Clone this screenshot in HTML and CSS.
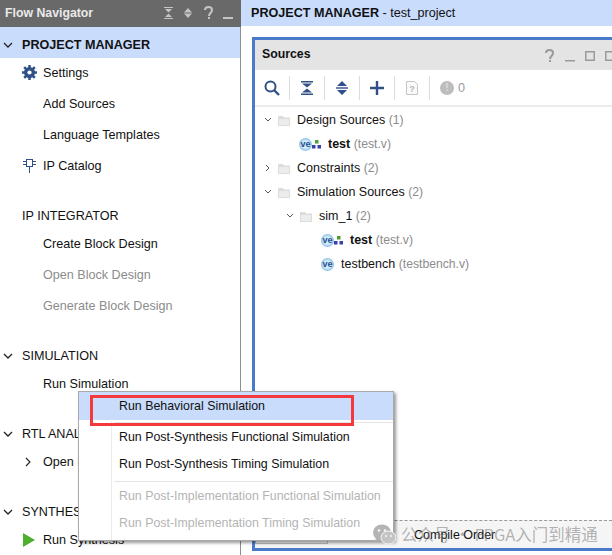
FILE: index.html
```html
<!DOCTYPE html>
<html lang="en">
<head>
<meta charset="utf-8">
<title>Flow Navigator</title>
<link rel="stylesheet" href="styles.css">
</head>
<body>
<div class="app">
  <aside class="nav">
    <header class="nav-head">
      <span class="nav-title">Flow Navigator</span>
      <svg class="nav-tools" width="70" height="14" viewBox="0 0 70 14">
        <g fill="#c4c4c4">
          <path d="M0 1h9v1H0zM0 12h9v1H0zM1 3h7L4.500 6.500zM1 11h7L4.500 7.500z"/>
          <path d="M20.500 6h7l-3.500-4zM20.500 8h7l-3.500 4z"/>
          <rect x="20" y="6.500" width="8" height="1"/>
          <rect x="59" y="11" width="10" height="2"/>
        </g>
        <path d="M41 4c0-4 7-4 7 0 0 3-3 3-3 6" fill="none" stroke="#c4c4c4" stroke-width="2"/>
        <rect x="44" y="11" width="2" height="2" fill="#c4c4c4"/>
      </svg>
    </header>
    <div class="group first">
      <div class="group-head active"><svg class="chev" width="10" height="6" viewBox="0 0 10 6"><path d="M1 1l4 4 4-4" fill="none" stroke="#222" stroke-width="1.300"/></svg><span class="bold">PROJECT MANAGER</span></div>
      <div class="item"><svg class="ico" width="15" height="15" viewBox="0 0 15 15"><circle cx="7.500" cy="7.500" r="3.800" fill="none" stroke="#2f5089" stroke-width="3.400"/><g stroke="#2f5089" stroke-width="2.500"><path d="M7.500 0v15M0 7.500h15M2.200 2.200l10.600 10.600M12.800 2.200L2.200 12.800"/></g><circle cx="7.500" cy="7.500" r="2.100" fill="#fff"/></svg><span>Settings</span></div>
      <div class="item"><span>Add Sources</span></div>
      <div class="item"><span>Language Templates</span></div>
      <div class="item"><svg class="ico" width="15" height="15" viewBox="0 0 15 15"><g fill="none" stroke="#2f5089"><rect x="4.500" y="1.500" width="6" height="7"/><path d="M7.500 9v6M1 3.500h3M1 6.500h3M11 3.500h3M11 6.500h3"/></g></svg><span>IP Catalog</span></div>
    </div>
    <div class="group">
      <div class="group-head"><svg class="chev blank" width="10" height="6"></svg><span>IP INTEGRATOR</span></div>
      <div class="item"><span>Create Block Design</span></div>
      <div class="item off"><span>Open Block Design</span></div>
      <div class="item off"><span>Generate Block Design</span></div>
    </div>
    <div class="group">
      <div class="group-head"><svg class="chev" width="10" height="6" viewBox="0 0 10 6"><path d="M1 1l4 4 4-4" fill="none" stroke="#222" stroke-width="1.300"/></svg><span>SIMULATION</span></div>
      <div class="item"><span>Run Simulation</span></div>
    </div>
    <div class="group">
      <div class="group-head"><svg class="chev" width="10" height="6" viewBox="0 0 10 6"><path d="M1 1l4 4 4-4" fill="none" stroke="#222" stroke-width="1.300"/></svg><span>RTL ANALYSIS</span></div>
      <div class="item"><svg class="sub" width="6" height="10" viewBox="0 0 6 10"><path d="M1 1l4 4-4 4" fill="none" stroke="#222" stroke-width="1.100"/></svg><span>Open Elaborated Design</span></div>
    </div>
    <div class="group">
      <div class="group-head"><svg class="chev" width="10" height="6" viewBox="0 0 10 6"><path d="M1 1l4 4 4-4" fill="none" stroke="#222" stroke-width="1.300"/></svg><span>SYNTHESIS</span></div>
      <div class="item"><svg class="ico play" width="12" height="14" viewBox="0 0 12 14"><path d="M0 0l12 7-12 7z" fill="#4caf2e"/></svg><span>Run Synthesis</span></div>
    </div>
  </aside>
  <main class="main">
    <div class="crumb"><span><b>PROJECT MANAGER</b> - test_project</span></div>
    <section class="panel">
      <header class="panel-head">
        <span class="panel-title">Sources</span>
        <svg class="panel-tools" width="67" height="14" viewBox="0 0 67 14">
          <path d="M1 4c0-4 7-4 7 0 0 3-3 3-3 6" fill="none" stroke="#9a9a9a" stroke-width="2"/>
          <rect x="4" y="11" width="2" height="2" fill="#9a9a9a"/>
          <rect x="20" y="11" width="10" height="1.500" fill="#9a9a9a"/>
          <rect x="40.750" y="2.750" width="8.500" height="8.500" fill="none" stroke="#9a9a9a" stroke-width="1.500"/>
          <rect x="60.750" y="2.750" width="8.500" height="8.500" fill="none" stroke="#9a9a9a" stroke-width="1.500"/>
        </svg>
      </header>
      <div class="toolbar">
        <span class="tool"><svg width="16" height="16" viewBox="0 0 16 16"><circle cx="6.500" cy="6.500" r="5" fill="none" stroke="#2f5089" stroke-width="2"/><path d="M10 10l5 5" stroke="#2f5089" stroke-width="2.400"/></svg></span>
        <span class="tool"><svg width="14" height="16" viewBox="0 0 14 16"><path fill="#2f5089" d="M1 1h12v1.500H1zM1 13.500h12V15H1zM2 3.500h10L7 7.500zM2 12.500h10L7 8.500z"/></svg></span>
        <span class="tool"><svg width="14" height="16" viewBox="0 0 14 16"><path fill="#2f5089" d="M2 6h10L7 1zM2 10h10l-5 5z"/><rect x="1" y="7.300" width="12" height="1.400" fill="#2f5089"/></svg></span>
        <span class="tool"><svg width="14" height="14" viewBox="0 0 14 14"><path fill="#2f5089" d="M5.800 0h2.400v5.800H14v2.400H8.200V14H5.800V8.200H0V5.800h5.800z"/></svg></span>
        <span class="tool"><svg width="12" height="14" viewBox="0 0 12 14"><path d="M.5.500h8l3 3v10H.5z" fill="#fafafa" stroke="#c4c4c4"/><text x="6" y="10.500" text-anchor="middle" class="doc-q">?</text></svg></span>
        <span class="tool last"><i class="dot">!</i><span class="count">0</span></span>
      </div>
      <div class="tree">
        <div class="row l0"><svg class="tw" width="8" height="6" viewBox="0 0 8 6"><path d="M1 1l3 3 3-3" fill="none" stroke="#555"/></svg><svg class="fold" width="12" height="11" viewBox="0 0 12 11"><path d="M0 1h5l1 1.500h6V11H0z" fill="#dcdcdc"/><rect x="1" y="4" width="10" height="6" fill="#ececec"/></svg><span>Design Sources <em>(1)</em></span></div>
        <div class="row l1"><i class="ve">ve</i><svg class="hier" width="9" height="9" viewBox="0 0 9 9"><rect x="3" y="0" width="3.500" height="3.500" fill="#4ca02e"/><rect y="5" width="3.500" height="3.500" fill="#3b3fa8"/><rect x="5.500" y="5" width="3.500" height="3.500" fill="#3b3fa8"/></svg><span><b>test</b> <em>(test.v)</em></span></div>
        <div class="row l0"><svg class="tw" width="8" height="8" viewBox="0 0 8 8"><path d="M2 1l3 3-3 3" fill="none" stroke="#555"/></svg><svg class="fold" width="12" height="11" viewBox="0 0 12 11"><path d="M0 1h5l1 1.500h6V11H0z" fill="#dcdcdc"/><rect x="1" y="4" width="10" height="6" fill="#ececec"/></svg><span>Constraints <em>(2)</em></span></div>
        <div class="row l0"><svg class="tw" width="8" height="6" viewBox="0 0 8 6"><path d="M1 1l3 3 3-3" fill="none" stroke="#555"/></svg><svg class="fold" width="12" height="11" viewBox="0 0 12 11"><path d="M0 1h5l1 1.500h6V11H0z" fill="#dcdcdc"/><rect x="1" y="4" width="10" height="6" fill="#ececec"/></svg><span>Simulation Sources <em>(2)</em></span></div>
        <div class="row l2"><svg class="tw" width="8" height="6" viewBox="0 0 8 6"><path d="M1 1l3 3 3-3" fill="none" stroke="#555"/></svg><svg class="fold" width="12" height="11" viewBox="0 0 12 11"><path d="M0 1h5l1 1.500h6V11H0z" fill="#dcdcdc"/><rect x="1" y="4" width="10" height="6" fill="#ececec"/></svg><span>sim_1 <em>(2)</em></span></div>
        <div class="row l3"><i class="ve">ve</i><svg class="hier" width="9" height="9" viewBox="0 0 9 9"><rect x="3" y="0" width="3.500" height="3.500" fill="#4ca02e"/><rect y="5" width="3.500" height="3.500" fill="#3b3fa8"/><rect x="5.500" y="5" width="3.500" height="3.500" fill="#3b3fa8"/></svg><span><b>test</b> <em>(test.v)</em></span></div>
        <div class="row l3"><i class="ve">ve</i><span class="tb">testbench <em>(testbench.v)</em></span></div>
      </div>
      <footer class="tabs"><span class="tab"></span><span class="tab-text">Compile Order</span></footer>
    </section>
  </main>
</div>
<div class="menu">
  <div class="mi hot">Run Behavioral Simulation</div>
  <hr class="sep sep-a">
  <div class="mi">Run Post-Synthesis Functional Simulation</div>
  <div class="mi">Run Post-Synthesis Timing Simulation</div>
  <hr class="sep sep-b">
  <div class="mi dis">Run Post-Implementation Functional Simulation</div>
  <div class="mi dis">Run Post-Implementation Timing Simulation</div>
</div>
<div class="redbox"></div>
<div class="mark"><svg width="23" height="21" viewBox="0 0 23 21"><ellipse cx="9" cy="8.500" rx="9" ry="8" fill="#b4b4b4"/><path d="M3 13l-1 5 5-3z" fill="#b4b4b4"/><ellipse cx="15.500" cy="13.500" rx="7.500" ry="6.500" fill="#c4c4c4" stroke="#f5f5f5"/><circle cx="6" cy="6.500" r="1.300" fill="#f5f5f5"/><circle cx="12" cy="6.500" r="1.300" fill="#f5f5f5"/><circle cx="13" cy="12" r="1" fill="#f5f5f5"/><circle cx="18" cy="12" r="1" fill="#f5f5f5"/></svg><span>公众号 · FPGA入门到精通</span></div>
</body>
</html>
```
FILE: styles.css
```css
* { box-sizing: border-box; }
html, body { margin: 0; padding: 0; }
body {
  width: 612px; height: 555px; overflow: hidden; background: #fff; position: relative;
  font: 12.6px "Liberation Sans", Arial, sans-serif; color: #111;
}
.app { display: flex; width: 612px; height: 555px; }
.nav { width: 241px; flex: none; border-right: 1px solid #8f8f8f; display: flex; flex-direction: column; }
.nav-head { height: 27px; flex: none; background: #696969; display: flex; align-items: center; justify-content: space-between; padding: 0 7px 2px 5px; margin-right: -1px; }
.nav-title { color: #e9e9e9; font-weight: bold; font-size: 12.300px; }
.bold { font-weight: bold; }
.group { display: flex; flex-direction: column; padding-top: 17px; flex: none; }
.group.first { padding-top: 0; }
.group-head { height: 31px; margin-bottom: -1px; display: flex; align-items: center; padding: 4px 0 0 3px; gap: 9px; flex: none; }
.group-head.active { background: #c9dcfb; }
.chev.blank { visibility: hidden; }
.item { height: 31px; flex: none; display: flex; align-items: center; padding-left: 22px; position: relative; }
.item > span { position: absolute; left: 43px; white-space: nowrap; }
.item.off { color: #8c8c8c; }
.ico { display: block; }
.play { margin-left: 1px; }
.sub { margin-left: 3px; }
.main { flex: 1; min-width: 0; display: flex; flex-direction: column; }
.crumb { height: 26px; background: #c9dcfb; display: flex; align-items: center; white-space: pre; padding-left: 10px; flex: none; }
.panel { margin: 11px 0 4px 11px; flex: 1; border: 3px solid #4a7bca; border-right: 0; display: flex; flex-direction: column; min-height: 0; }
.panel-head { height: 30px; background: #e4e4e4; display: flex; align-items: center; justify-content: space-between; padding-left: 7px; flex: none; }
.panel-title { font-weight: bold; font-size: 12.300px; margin-top: -2px; }
.panel-tools { flex: none; margin-top: 2px; }
.toolbar { height: 37px; display: flex; align-items: center; border-bottom: 2px solid #ececec; flex: none; }
.tool { width: 35px; height: 24px; display: flex; align-items: center; justify-content: center; border-right: 1px solid #dcdcdc; }
.tool.last { border: 0; justify-content: flex-start; padding-left: 10px; gap: 4px; }
.doc-q { font-size: 9px; fill: #b4b4b4; font-weight: bold; }
.dot { width: 14px; height: 14px; border-radius: 50%; background: #bdbdbd; color: #ddd; font: bold 10px/14px "Liberation Sans", sans-serif; text-align: center; }
.count { color: #999; }
.tree { flex: 1; display: flex; flex-direction: column; padding-top: 1px; min-height: 0; font-size: 12.500px; }
.row { height: 24px; display: flex; align-items: center; white-space: pre; flex: none; }
.row em { font-style: normal; color: #8c8c8c; font-size: 12.200px; }
.row b { font-weight: bold; }
.tw { margin-right: 6px; flex: none; }
.fold { margin-right: 7px; flex: none; }
.l0 { padding-left: 9px; }
.l1 { padding-left: 44px; }
.l2 { padding-left: 31px; }
.l3 { padding-left: 66px; }
.ve { width: 13px; height: 13px; margin-right: -1px; border-radius: 50%; background: radial-gradient(circle, #d5ecfb 40%, #3f8ed2 100%); color: #1f4f8c; font: bold 9px/13px "Liberation Sans", sans-serif; text-align: center; flex: none; }
.hier { margin: 0 7px 0 1px; flex: none; }
.tb { margin-left: 8px; }
.tabs { height: 28px; flex: none; border-top: 1px dashed #999; background: #f5f5f5; display: flex; align-items: flex-end; position: relative; padding-bottom: 4px; }
.tab { height: 22px; width: 73px; background: #f5f5f5; border: 1px solid #bdbdbd; }
.tab-text { position: absolute; left: 159px; top: 7px; font-size: 12.500px; }
.menu { position: absolute; left: 78px; top: 391px; width: 316px; height: 150px; background: #fff; border: 1px solid #a9a9a9; box-shadow: 2px 2px 3px rgba(0,0,0,.4); font-size: 12.400px; }
.menu::before { content: ""; position: absolute; left: 32px; top: 29px; bottom: 0; width: 1px; background: #ebebeb; }
.mi { height: 27px; padding-left: 40px; line-height: 26px; position: relative; white-space: nowrap; }
.mi.hot { height: 28px; line-height: 28px; background: #c9dcfb; }
.mi.dis { color: #b4b4b4; }
.sep { position: relative; border: 0; height: 1px; background: #e4e4e4; margin: 0 0 0 35px; }
.sep-a { margin-top: 2px; margin-bottom: 1px; }
.sep-b { margin-top: 3px; margin-bottom: 1px; }
.redbox { position: absolute; left: 90px; top: 395px; width: 264px; height: 31px; border: 3px solid #f4383c; }
.mark { position: absolute; left: 373px; top: 522px; display: flex; align-items: center; gap: 5px; color: rgba(120,120,120,.55); font: 16.500px "Noto Sans CJK SC", sans-serif; white-space: nowrap; }
```
